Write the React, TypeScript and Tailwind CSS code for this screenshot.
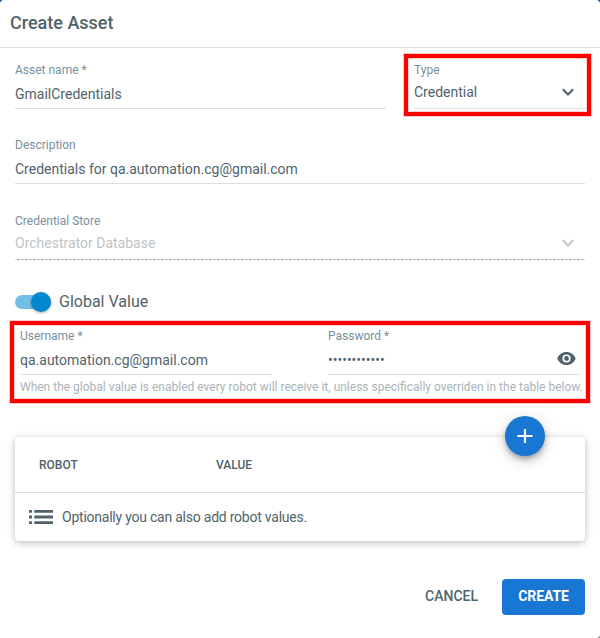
import type { ReactNode } from "react";

function Chevron() {
  return (
    <svg viewBox="0 0 24 24" className="-my-0.5 size-6 shrink-0" fill="none" stroke="currentColor" strokeWidth="2.1">
      <path d="m6.8 9.3 5.2 5.2 5.2-5.2" />
    </svg>
  );
}

function Label({ children }: { children: ReactNode }) {
  return <div className="h-4 text-[12px] leading-4 whitespace-nowrap text-[#78909c]">{children}</div>;
}

function Highlight({ className }: { className: string }) {
  return (
    <div
      className={`pointer-events-none absolute border-4 border-[#ff0000] shadow-[0_0_0_1px_rgba(255,0,0,0.22),inset_0_0_0_1px_rgba(255,0,0,0.18)] ${className}`}
    />
  );
}

export default function App() {
  return (
    <div className="relative h-[638px] w-[600px] overflow-hidden bg-[linear-gradient(#154a8c_50%,#808080_50%)] font-[Roboto,sans-serif] text-[#50636a]">
      <div className="flex h-[638px] flex-col rounded-t-[4px] rounded-br-[4px] bg-white">
        <header className="flex h-12 shrink-0 items-center border-b border-[#dedede] pb-0.5 pl-2.5">
          <h1 className="text-[18px] leading-6 font-medium">Create Asset</h1>
        </header>

        <main className="flex flex-col px-[15px]">
          <div className="flex justify-between pt-3.5">
            <div className="h-[47px] w-[371px] border-b border-[#dedede]">
              <Label>Asset name *</Label>
              <div className="mt-1.5 text-[14px] leading-5">GmailCredentials</div>
            </div>
            <div className="h-[47px] w-[171px] border-b border-[#dedede]">
              <Label>Type</Label>
              <div className="mt-1 flex items-center justify-between pr-[5px] text-[14px] leading-5">
                Credential
                <Chevron />
              </div>
            </div>
          </div>

          <div className="mt-7 h-[47px] border-b border-[#dedede]">
            <Label>Description</Label>
            <div className="mt-1.5 text-[14px] leading-5">Credentials for qa.automation.cg@gmail.com</div>
          </div>

          <div className="mt-7 h-12 bg-[linear-gradient(to_right,#dedede_0_3px,#777777_3px_4px)] bg-[length:4px_1px] bg-bottom-left bg-repeat-x pt-px">
            <Label>Credential Store</Label>
            <div className="mt-1 flex items-center justify-between pr-[5px] text-[14px] leading-5 text-[#c0c4c6]">
              Orchestrator Database
              <Chevron />
            </div>
          </div>

          <div className="mt-[30px] flex h-6 items-center gap-2">
            <div className="flex h-3.5 w-9 items-center justify-end rounded-full bg-[#73bfe8]">
              <div className="size-5 shrink-0 rounded-full bg-[#0288d1] shadow-[0_1px_3px_rgba(0,0,0,0.35)]" />
            </div>
            <span className="text-[16px] leading-6">Global Value</span>
          </div>

          <section className="mt-3.5 px-[5px]">
            <div className="flex justify-between">
              <div className="h-[47px] w-[252px] border-b border-[#dedede]">
                <Label>Username *</Label>
                <div className="mt-1.5 text-[14px] leading-5">qa.automation.cg@gmail.com</div>
              </div>
              <div className="h-[47px] w-[252px] border-b border-[#dedede]">
                <Label>Password *</Label>
                <div className="mt-1 flex h-[22px] items-start justify-between pr-1 text-[14px] leading-5">
                  <span className="pt-0.5">••••••••••••</span>
                  <svg viewBox="0 0 19 13" className="mt-1 h-[13px] w-[19px]" fill="currentColor" fillRule="evenodd">
                    <path d="M9.5 0C5.3 0 1.8 2.6.3 6.5 1.8 10.4 5.3 13 9.5 13s7.7-2.6 9.2-6.5C17.2 2.6 13.7 0 9.5 0zm0 10.6a4.100 4.100 0 1 1 0-8.200 4.100 4.100 0 0 1 0 8.200zm0-6.500a2.400 2.400 0 1 0 0 4.800 2.400 2.400 0 0 0 0-4.800z" />
                  </svg>
                </div>
              </div>
            </div>
            <p className="mt-1 text-[12px] leading-4 whitespace-nowrap text-[#aab3b8]">
              When the global value is enabled every robot will receive it, unless specifically overriden in the table below.
            </p>
          </section>

          <section className="relative mt-[42px] h-[104px] rounded-[4px] bg-white shadow-[0_2px_6px_rgba(0,0,0,0.2),0_1px_12px_rgba(0,0,0,0.08)]">
            <div className="grid h-14 grid-cols-[177px_1fr] items-center border-b border-[#dedede] pl-6 text-[12px] leading-4 font-medium">
              <span>ROBOT</span>
              <span>VALUE</span>
            </div>
            <div className="flex h-12 items-center gap-[9px] pl-3.5">
              <svg viewBox="0 0 24 14" className="h-3.5 w-6" fill="currentColor">
                <path d="M0 0h3v2.800H0zM5.300 0H24v2.800H5.300zM0 5.600h3v2.800H0zM5.300 5.600H24v2.800H5.300zM0 11.200h3V14H0zM5.300 11.200H24V14H5.300z" />
              </svg>
              <span className="text-[14px] leading-5 tracking-[-0.23px]">Optionally you can also add robot values.</span>
            </div>
            <button className="absolute -top-[21px] right-10 flex size-10 items-center justify-center rounded-full bg-[#1976d2] text-white shadow-[0_3px_5px_-1px_rgba(0,0,0,0.3),0_6px_10px_rgba(0,0,0,0.14),0_1px_18px_rgba(0,0,0,0.1)]">
              <svg viewBox="0 0 16 14" className="h-3.5 w-4" fill="currentColor">
                <path d="M.5 6H6.900V0h2.200v6h6.400v2H9.100v6H6.900V8H.5z" />
              </svg>
            </button>
          </section>

          <footer className="mt-[38px] flex h-9 items-center justify-end gap-6 text-[14px] leading-5 font-medium">
            <button className="-mt-0.5">CANCEL</button>
            <button className="h-9 w-[83px] rounded-[4px] bg-[#1976d2] pb-0.5 font-bold tracking-[-0.1px] text-white">CREATE</button>
          </footer>
        </main>
      </div>

      <Highlight className="top-[54px] left-[404px] h-[62px] w-[187px]" />
      <Highlight className="top-[321px] left-[10px] h-[82px] w-[580px]" />
    </div>
  );
}
